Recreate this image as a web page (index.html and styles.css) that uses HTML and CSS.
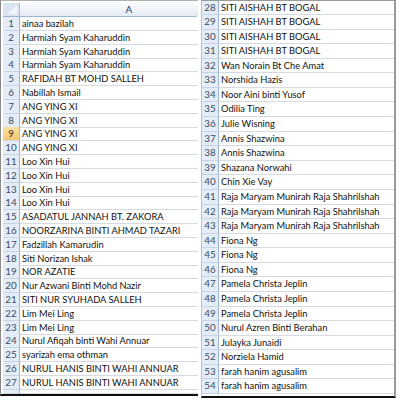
FILE: index.html
```html
<!DOCTYPE html>
<html>
<head>
<meta charset="utf-8">
<link rel="stylesheet" href="styles.css">
</head>
<body>
<div class="sheets">
  <div class="sheet sheet-left">
    <div class="hdr">
      <div class="corner"><span class="tri"></span></div>
      <div class="colhdr">A</div>
    </div>
    <div class="row"><div class="rh">1</div><div class="c">ainaa bazilah</div></div>
    <div class="row"><div class="rh">2</div><div class="c">Harmiah Syam Kaharuddin</div></div>
    <div class="row"><div class="rh">3</div><div class="c">Harmiah Syam Kaharuddin</div></div>
    <div class="row"><div class="rh">4</div><div class="c">Harmiah Syam Kaharuddin</div></div>
    <div class="row"><div class="rh">5</div><div class="c">RAFIDAH BT MOHD SALLEH</div></div>
    <div class="row"><div class="rh">6</div><div class="c">Nabillah Ismail</div></div>
    <div class="row"><div class="rh">7</div><div class="c">ANG YING XI</div></div>
    <div class="row"><div class="rh">8</div><div class="c">ANG YING XI</div></div>
    <div class="row"><div class="rh rh-sel">9</div><div class="c">ANG YING XI</div></div>
    <div class="row"><div class="rh">10</div><div class="c">ANG YING XI</div></div>
    <div class="row"><div class="rh">11</div><div class="c">Loo Xin Hui</div></div>
    <div class="row"><div class="rh">12</div><div class="c">Loo Xin Hui</div></div>
    <div class="row"><div class="rh">13</div><div class="c">Loo Xin Hui</div></div>
    <div class="row"><div class="rh">14</div><div class="c">Loo Xin Hui</div></div>
    <div class="row"><div class="rh">15</div><div class="c">ASADATUL JANNAH BT. ZAKORA</div></div>
    <div class="row"><div class="rh">16</div><div class="c">NOORZARINA BINTI AHMAD TAZARI</div></div>
    <div class="row"><div class="rh">17</div><div class="c">Fadzillah Kamarudin</div></div>
    <div class="row"><div class="rh">18</div><div class="c">Siti Norizan Ishak</div></div>
    <div class="row"><div class="rh">19</div><div class="c">NOR AZATIE</div></div>
    <div class="row"><div class="rh">20</div><div class="c">Nur Azwani Binti Mohd Nazir</div></div>
    <div class="row"><div class="rh">21</div><div class="c">SITI NUR SYUHADA SALLEH</div></div>
    <div class="row"><div class="rh">22</div><div class="c">Lim Mei Ling</div></div>
    <div class="row"><div class="rh">23</div><div class="c">Lim Mei Ling</div></div>
    <div class="row"><div class="rh">24</div><div class="c">Nurul Afiqah binti Wahi Annuar</div></div>
    <div class="row"><div class="rh">25</div><div class="c">syarizah ema othman</div></div>
    <div class="row"><div class="rh">26</div><div class="c">NURUL HANIS BINTI WAHI ANNUAR</div></div>
    <div class="row"><div class="rh">27</div><div class="c">NURUL HANIS BINTI WAHI ANNUAR</div></div>
    <div class="row row-partial"><div class="rh"></div><div class="c"></div></div>
  </div>
  <div class="sheet sheet-right">
    <div class="row row-first"><div class="rh">28</div><div class="c">SITI AISHAH BT BOGAL</div></div>
    <div class="row"><div class="rh">29</div><div class="c">SITI AISHAH BT BOGAL</div></div>
    <div class="row"><div class="rh">30</div><div class="c">SITI AISHAH BT BOGAL</div></div>
    <div class="row"><div class="rh">31</div><div class="c">SITI AISHAH BT BOGAL</div></div>
    <div class="row"><div class="rh">32</div><div class="c">Wan Norain Bt Che Amat</div></div>
    <div class="row"><div class="rh">33</div><div class="c">Norshida Hazis</div></div>
    <div class="row"><div class="rh">34</div><div class="c">Noor Aini binti Yusof</div></div>
    <div class="row"><div class="rh">35</div><div class="c">Odilia Ting</div></div>
    <div class="row"><div class="rh">36</div><div class="c">Julie Wisning</div></div>
    <div class="row"><div class="rh">37</div><div class="c">Annis Shazwina</div></div>
    <div class="row"><div class="rh">38</div><div class="c">Annis Shazwina</div></div>
    <div class="row"><div class="rh">39</div><div class="c">Shazana Norwahi</div></div>
    <div class="row"><div class="rh">40</div><div class="c">Chin Xie Vay</div></div>
    <div class="row"><div class="rh">41</div><div class="c">Raja Maryam Munirah Raja Shahrilshah</div></div>
    <div class="row"><div class="rh">42</div><div class="c">Raja Maryam Munirah Raja Shahrilshah</div></div>
    <div class="row"><div class="rh">43</div><div class="c">Raja Maryam Munirah Raja Shahrilshah</div></div>
    <div class="row"><div class="rh">44</div><div class="c">Fiona Ng</div></div>
    <div class="row"><div class="rh">45</div><div class="c">Fiona Ng</div></div>
    <div class="row"><div class="rh">46</div><div class="c">Fiona Ng</div></div>
    <div class="row"><div class="rh">47</div><div class="c">Pamela Christa Jeplin</div></div>
    <div class="row"><div class="rh">48</div><div class="c">Pamela Christa Jeplin</div></div>
    <div class="row"><div class="rh">49</div><div class="c">Pamela Christa Jeplin</div></div>
    <div class="row"><div class="rh">50</div><div class="c">Nurul Azren Binti Berahan</div></div>
    <div class="row"><div class="rh">51</div><div class="c">Julayka Junaidi</div></div>
    <div class="row"><div class="rh">52</div><div class="c">Norziela Hamid</div></div>
    <div class="row"><div class="rh">53</div><div class="c">farah hanim agusalim</div></div>
    <div class="row"><div class="rh">54</div><div class="c">farah hanim agusalim</div></div>
  </div>
</div>
</body>
</html>
```
FILE: styles.css
```css
* { box-sizing: border-box; }
html, body {
  margin: 0;
  padding: 0;
  background: #ffffff;
}
body {
  width: 400px;
  height: 400px;
  overflow: hidden;
  font-family: Lato, "Open Sans", sans-serif;
  font-size: 9.3px;
  color: #111;
}
.sheets {
  display: flex;
  align-items: flex-start;
  gap: 3px;
}
.sheet {
  display: flex;
  flex-direction: column;
  overflow: hidden;
}
.sheet-left {
  width: 198px;
  height: 396px;
  border-left: 1px solid #8a8a8a;
  border-top: 1px solid #b0b0b0;
  border-bottom: 2px solid #111;
  padding: 2px 0 0 2px;
}
.sheet-right {
  width: 195px;
  height: 398px;
  border-left: 1px solid #b5c4d8;
  border-top: 1px solid #9a9a9a;
  border-right: 2px solid #9a9a9a;
  border-bottom: 2px solid #111;
  padding-bottom: 2px;
}
.hdr {
  display: grid;
  grid-template-columns: 17px 1fr;
  height: 14px;
  flex: none;
}
.corner {
  position: relative;
  background: #dbe5f1;
  border-right: 1px solid #a9bdd6;
  border-bottom: 1px solid #9eb6ce;
}
.tri {
  position: absolute;
  right: 2px;
  bottom: 2px;
  width: 0;
  height: 0;
  border-left: 9px solid transparent;
  border-bottom: 9px solid #f2f6fb;
}
.colhdr {
  background: linear-gradient(#fbfcfe, #e4ebf4);
  border-bottom: 1px solid #9eb6ce;
  border-top-right-radius: 3px;
  border-bottom-right-radius: 3px;
  color: #2c3e57;
  text-align: center;
  padding-left: 40px;
  line-height: 13px;
  font-size: 10px;
}
.row {
  display: grid;
  grid-template-columns: 17px 1fr;
  height: 13.8px;
  flex: none;
}
.sheet-right .row {
  height: 14.59px;
}
.sheet-right .row-first {
  height: 14px;
}
.row-partial {
  height: 4px;
}
.rh {
  background: #e4ecf7;
  border-right: 1px solid #9eb6ce;
  border-bottom: 1px solid #c9d5e6;
  color: #3b4c66;
  text-align: center;
  font-size: 9.8px;
  line-height: 13px;
}
.rh-sel {
  background: linear-gradient(#fbe0a0, #f6c670);
  color: #2a2a2a;
}
.c {
  border-bottom: 1px solid #d6dbe3;
  padding-left: 2px;
  white-space: nowrap;
  overflow: hidden;
  line-height: 13px;
}
```
